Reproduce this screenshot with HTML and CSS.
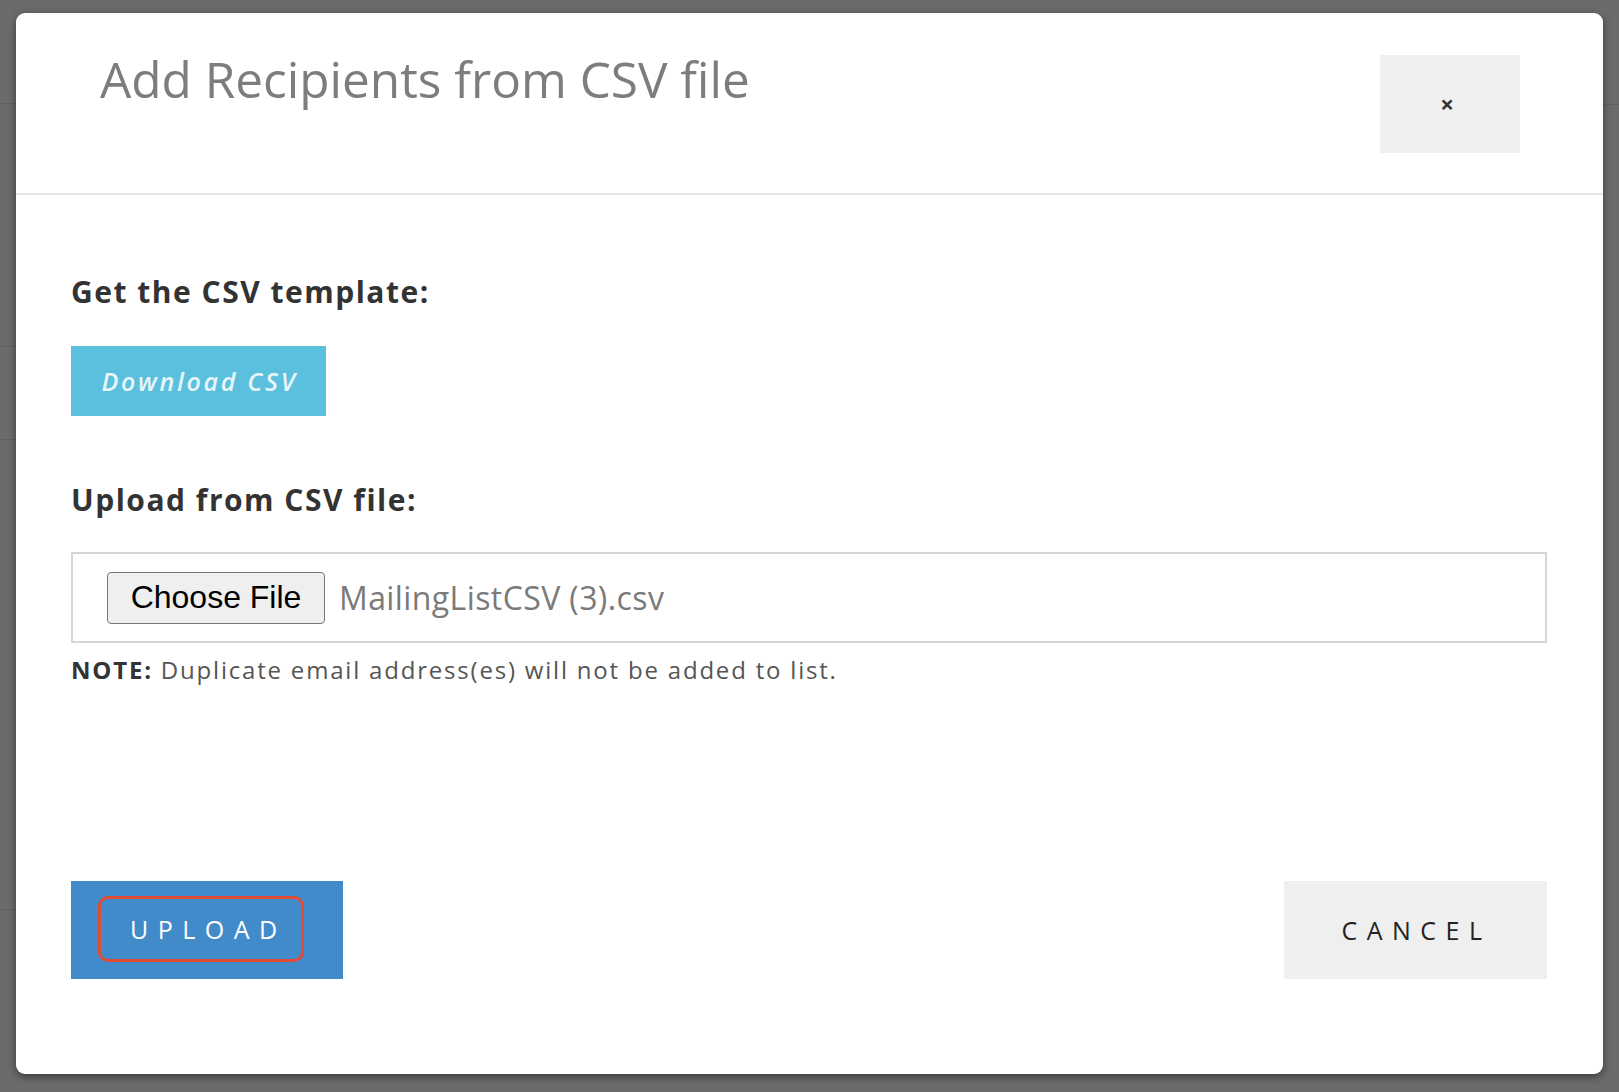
FILE: index.html
```html
<!DOCTYPE html>
<html lang="en">
<head>
<meta charset="utf-8">
<title>Add Recipients from CSV file</title>
<link rel="stylesheet" href="styles.css">
</head>
<body>
<div class="modal">
  <div class="modal-header">
    <h4 class="modal-title">Add Recipients from CSV file</h4>
    <button class="close" type="button">×</button>
  </div>
  <div class="modal-body">
    <h5 class="section-label">Get the CSV template:</h5>
    <a class="btn-download">Download CSV</a>
    <h5 class="section-label upload-label">Upload from CSV file:</h5>
    <div class="file-box">
      <span class="choose-file">Choose File</span>
      <span class="file-name">MailingListCSV (3).csv</span>
    </div>
    <p class="note"><b>NOTE:</b> Duplicate email address(es) will not be added to list.</p>
    <div class="actions">
      <button class="btn-upload" type="button"><span class="focus-ring">UPLOAD</span></button>
      <button class="btn-cancel" type="button">CANCEL</button>
    </div>
  </div>
</div>
</body>
</html>
```

FILE: styles.css
```css
html, body {
  margin: 0;
  height: 100%;
}

body {
  padding: 13px 16px 18px;
  box-sizing: border-box;
  font-family: "Open Sans", "Noto Sans", sans-serif;
  background-color: #6b6b6b;
  background-image:
    linear-gradient(#606060, #606060),
    linear-gradient(#606060, #606060),
    linear-gradient(#606060, #606060),
    linear-gradient(#606060, #606060),
    linear-gradient(#606060, #606060);
  background-repeat: no-repeat;
  background-size: 16px 1px, 16px 1px, 16px 1px, 16px 1px, 16px 1px;
  background-position: 0 103px, 0 346px, 0 439px, 0 909px, 100% 104px;
}

.modal {
  background: #fff;
  border-radius: 9px;
  box-shadow: 0 3px 8px rgba(0, 0, 0, 0.45);
  display: flex;
  flex-direction: column;
}

.modal-header {
  height: 182px;
  box-sizing: border-box;
  padding: 35px 83px 0 84px;
  border-bottom: 2px solid #e6e6e6;
  display: flex;
  justify-content: space-between;
  align-items: flex-start;
}

.modal-title {
  margin: 0;
  font-size: 49.5px;
  line-height: 62px;
  font-weight: 400;
  color: #7d7d7d;
}

.close {
  margin-top: 7px;
  width: 140px;
  height: 98px;
  border: 0;
  background: #efefef;
  color: #333;
  font-family: "Open Sans", sans-serif;
  font-size: 24px;
  font-weight: 700;
  line-height: 1;
  padding: 0 6px 0 0;
}

.modal-body {
  padding: 77px 56px 95px 55px;
  display: flex;
  flex-direction: column;
  align-items: flex-start;
}

.section-label {
  margin: 0;
  font-size: 30px;
  line-height: 40px;
  font-weight: 700;
  letter-spacing: 1.5px;
  color: #333;
}

.btn-download {
  margin-top: 34px;
  width: 255px;
  height: 70px;
  background: #5bc0de;
  color: #e6f6fb;
  font-size: 25px;
  font-weight: 600;
  font-style: italic;
  letter-spacing: 2.7px;
  display: flex;
  align-items: center;
  justify-content: center;
  padding-left: 2px;
  box-sizing: border-box;
}

.upload-label {
  margin-top: 64px;
}

.file-box {
  margin-top: 32px;
  align-self: stretch;
  height: 91px;
  box-sizing: border-box;
  border: 2px solid #d6d6d6;
  display: flex;
  align-items: center;
  padding-left: 34px;
  gap: 14px;
}

.choose-file {
  width: 218px;
  height: 52px;
  box-sizing: border-box;
  border: 1px solid #767676;
  border-radius: 4px;
  background: #efefef;
  font-family: "Liberation Sans", Arial, sans-serif;
  font-size: 32px;
  color: #000;
  display: flex;
  align-items: center;
  justify-content: center;
}

.file-name {
  font-size: 32px;
  letter-spacing: 0.4px;
  color: #7a7a7a;
}

.note {
  margin: 11px 0 0;
  font-size: 24px;
  line-height: 32px;
  letter-spacing: 1.8px;
  color: #555;
}

.note b {
  color: #333;
}

.actions {
  margin-top: 195px;
  align-self: stretch;
  display: flex;
  justify-content: space-between;
}

.btn-upload,
.btn-cancel {
  height: 98px;
  border: 0;
  font-family: "Open Sans", sans-serif;
  font-size: 25px;
  letter-spacing: 9.5px;
  display: flex;
  align-items: center;
}

.btn-upload {
  width: 272px;
  background: #428bca;
  color: #fff;
  padding: 0 0 2px 27px;
}

.focus-ring {
  width: 206px;
  height: 66px;
  box-sizing: border-box;
  border: 3px solid #e24b31;
  border-radius: 10px;
  display: flex;
  align-items: center;
  padding-left: 29px;
}

.btn-cancel {
  width: 263px;
  background: #efefef;
  color: #222;
  justify-content: center;
  padding: 0 0 0 2px;
}
```
